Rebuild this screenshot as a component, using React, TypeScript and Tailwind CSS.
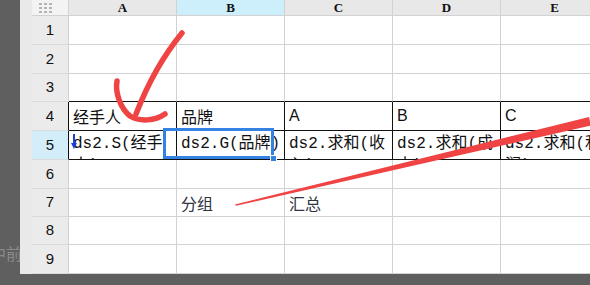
import React from "react";

const cols = ["A", "B", "C", "D", "E"];
const rowHeights = [29, 29, 28, 29, 29, 29, 28, 28, 29];

type CellDef = { text?: string; kind?: "cjk" | "mono" | "sans" | "soft" };

const content: Record<string, CellDef> = {
  "4-0": { text: "经手人", kind: "cjk" },
  "4-1": { text: "品牌", kind: "cjk" },
  "4-2": { text: "A", kind: "sans" },
  "4-3": { text: "B", kind: "sans" },
  "4-4": { text: "C", kind: "sans" },
  "5-0": { text: "ds2.S(经手人)", kind: "mono" },
  "5-1": { text: "ds2.G(品牌)", kind: "mono" },
  "5-2": { text: "ds2.求和(收入)", kind: "mono" },
  "5-3": { text: "ds2.求和(成本)", kind: "mono" },
  "5-4": { text: "ds2.求和(利润)", kind: "mono" },
  "7-1": { text: "分组", kind: "soft" },
  "7-2": { text: "汇总", kind: "soft" },
};

function Cell({ r, c }: { r: number; c: number }) {
  const def = content[`${r}-${c}`];
  const boxed = r === 4 || r === 5;
  const topOfBox = r === 3;
  const border = boxed
    ? "border-r-[#111] border-b-[#111]"
    : topOfBox
    ? "border-r-[#d2d2d2] border-b-[#111]"
    : "border-r-[#d2d2d2] border-b-[#d2d2d2]";
  let inner: React.ReactNode = null;
  if (def?.text) {
    if (def.kind === "mono") {
      inner = (
        <div
          className="pl-[4px] pt-[2px] text-[16px] leading-[22px] text-[#111] break-all"
          style={{ fontFamily: "'Liberation Mono', 'Noto Sans CJK SC', monospace" }}
        >
          {def.text}
        </div>
      );
    } else if (def.kind === "sans") {
      inner = (
        <div
          className="h-full flex items-center pl-[4px] text-[16px] text-[#111]"
          style={{ fontFamily: "'Liberation Sans', Arial, sans-serif" }}
        >
          {def.text}
        </div>
      );
    } else {
      inner = (
        <div
          className={`h-full flex items-center pl-[4px] text-[16px] ${def.kind === "soft" ? "text-[#2e3440]" : "text-[#111]"}`}
          style={{ fontFamily: "'Noto Sans CJK SC', sans-serif" }}
        >
          {def.text}
        </div>
      );
    }
  }
  return <div className={`bg-white border-r border-b overflow-hidden ${border}`}>{inner}</div>;
}

export default function App() {
  return (
    <div className="relative w-[590px] h-[285px] bg-[#5f5f5f] overflow-hidden">
      <div
        className="absolute left-[-10px] top-[241px] text-[16px] text-[#8a8a8a]"
        style={{ fontFamily: "'Noto Sans CJK SC', sans-serif" }}
      >
        中前
      </div>
      <div className="relative flex h-full pl-[20px]">
        <div className="relative h-[274px] w-[570px] bg-[#e9e9e9] pl-[12px] overflow-hidden">
          <div className="grid w-[577px] grid-cols-[37px_108px_108px_108px_108px_108px] grid-rows-[16px_29px_29px_28px_29px_29px_29px_28px_28px_29px]">
            <div className="bg-[#f3f3f3] border-r border-b border-[#d2d2d2] flex items-center pl-[7px]">
              <div className="grid grid-cols-3 gap-[2px]">
                {Array.from({ length: 9 }).map((_, i) => (
                  <div key={i} className="w-[3px] h-[2px] bg-[#b5b5b5]" />
                ))}
              </div>
            </div>
            {cols.map((c) => (
              <div
                key={c}
                className={`border-r border-b border-[#d2d2d2] flex items-center justify-center text-[13px] leading-none font-bold text-[#111] ${c === "B" ? "bg-[#cdeefb]" : "bg-[#e8e8e8]"}`}
                style={{ fontFamily: "'Liberation Serif', serif" }}
              >
                {c}
              </div>
            ))}
            {rowHeights.map((_, ri) => {
              const r = ri + 1;
              const boxed = r === 4 || r === 5;
              return (
                <React.Fragment key={r}>
                  <div
                    className={`border-r border-b border-b-[#dadada] flex items-center justify-center text-[15px] text-[#111] ${boxed ? "border-r-[#111]" : "border-r-[#d2d2d2]"} ${r === 5 ? "bg-[#d3eef9]" : "bg-[#ebebeb]"}`}
                    style={{ fontFamily: "'Liberation Sans', Arial, sans-serif" }}
                  >
                    {r}
                  </div>
                  {cols.map((_, c) => (
                    <Cell key={c} r={r} c={c} />
                  ))}
                </React.Fragment>
              );
            })}
          </div>
          <div className="absolute left-[143px] top-[128px] w-[111px] h-[31px] border-[3px] border-[#3483e4]" />
          <div className="absolute left-[250px] top-[155px] w-[7px] h-[7px] bg-[#3483e4] border border-white" />
        </div>
      </div>
      <svg className="absolute left-0 top-0" width="590" height="285" viewBox="0 0 590 285">
        <g stroke="#1f3fd8" strokeWidth="2" fill="#1f3fd8">
          <line x1="74" y1="134" x2="74" y2="145" />
          <polygon points="71,143 77,143 74,149" stroke="none" />
        </g>
        <path d="M182 33 C168 50 150 78 136 114" stroke="#f04343" strokeWidth="5.5" fill="none" strokeLinecap="round" />
        <path d="M117 81 C115 92 120 108 130 116 C140 122 155 121 165 114" stroke="#f04343" strokeWidth="5.5" fill="none" strokeLinecap="round" />
        <polygon points="235,204.5 589,117 591,125.5 236,205.8" fill="#f04343" />
      </svg>
    </div>
  );
}
